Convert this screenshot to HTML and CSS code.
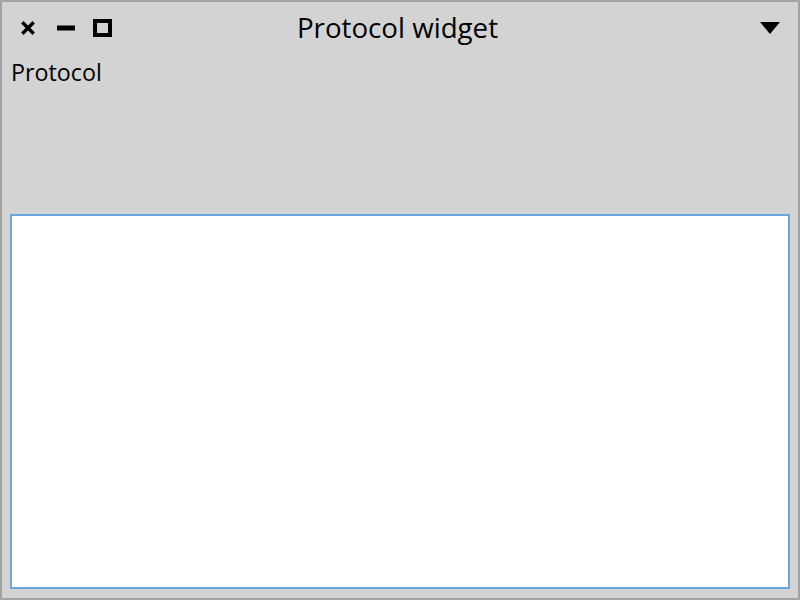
FILE: index.html
```html
<!DOCTYPE html>
<html lang="en">
<head>
<meta charset="utf-8">
<title>Protocol widget</title>
<link rel="stylesheet" href="styles.css">
</head>
<body>
<div class="window">
  <div class="titlebar">
    <div class="controls">
      <svg class="icon-close" width="14" height="14" viewBox="0 0 14 14"><path d="M2.5 2.5 L11.5 11.5 M11.5 2.5 L2.5 11.5" stroke="#000" stroke-width="3.4" stroke-linecap="square"/></svg>
      <svg class="icon-min" width="18" height="6" viewBox="0 0 18 6"><rect x="0" y="0.5" width="18" height="5" fill="#000"/></svg>
      <svg class="icon-max" width="19" height="18" viewBox="0 0 19 18"><rect x="2" y="2" width="15" height="14" fill="none" stroke="#000" stroke-width="4"/></svg>
    </div>
    <div class="title">Protocol widget</div>
    <div class="menu">
      <svg class="icon-menu" width="20" height="12" viewBox="0 0 20 12"><polygon points="0,0 20,0 10,12" fill="#000"/></svg>
    </div>
  </div>
  <div class="content">
    <div class="label">Protocol</div>
    <div class="textbox"></div>
  </div>
</div>
</body>
</html>
```
FILE: styles.css
```css
html, body {
  margin: 0;
  padding: 0;
}
body {
  width: 800px;
  height: 600px;
  font-family: "Open Sans", "Noto Sans", sans-serif;
  color: #000;
}
.window {
  box-sizing: border-box;
  width: 800px;
  height: 600px;
  background: #d3d3d3;
  border: 2px solid #a3a3a3;
  display: flex;
  flex-direction: column;
}
.titlebar {
  height: 52px;
  flex: none;
  display: grid;
  grid-template-columns: 1fr auto 1fr;
  align-items: center;
}
.controls {
  display: flex;
  align-items: center;
  padding-left: 19px;
}
.icon-close { display: block; }
.icon-min { display: block; margin-left: 22px; }
.icon-max { display: block; margin-left: 18px; }
.title {
  font-size: 27.7px;
  line-height: 32px;
  white-space: nowrap;
  padding: 0 5px 2px 0;
}
.menu {
  display: flex;
  justify-content: flex-end;
  padding-right: 18px;
}
.icon-menu { display: block; }
.content {
  flex: 1;
  display: flex;
  flex-direction: column;
  padding: 0 8px 9px 8px;
}
.label {
  font-size: 23.3px;
  line-height: 30px;
  padding: 3px 0 0 1px;
  height: 30px;
}
.textbox {
  flex: 1;
  margin-top: 127px;
  background: #fff;
  border: 2px solid #6aa5db;
}
```
